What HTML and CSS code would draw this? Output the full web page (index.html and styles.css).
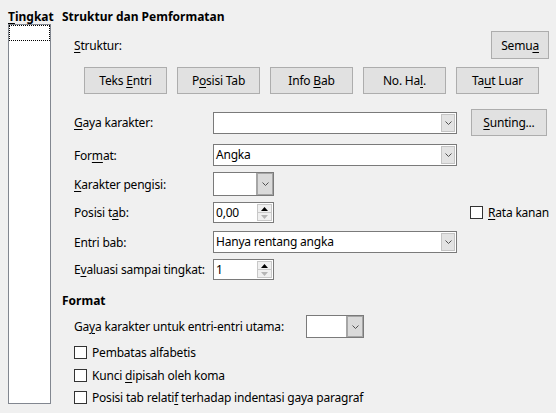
FILE: index.html
```html
<!DOCTYPE html>
<html lang="id">
<head>
<meta charset="utf-8">
<link rel="stylesheet" href="styles.css">
</head>
<body>
<div class="dlg">
  <div class="levels">
    <div class="head"><u>T</u>ingkat</div>
    <div class="listbox"><div class="focus"></div></div>
  </div>
  <div class="main">
    <div class="head">Struktur dan Pemformatan</div>
    <div class="row-struktur">
      <span><u>S</u>truktur:</span>
      <button class="btn semua">Semu<u>a</u></button>
    </div>
    <div class="btnrow">
      <button class="btn">Teks <u>E</u>ntri</button>
      <button class="btn">P<u>o</u>sisi Tab</button>
      <button class="btn">Info <u>B</u>ab</button>
      <button class="btn">No. Ha<u>l</u>.</button>
      <button class="btn">Ta<u>u</u>t Luar</button>
    </div>

    <div class="frow r-gaya">
      <span class="label"><u>G</u>aya karakter:</span>
      <div class="combo"><span class="ctext"></span><span class="drop"><svg width="7" height="4" viewBox="0 0 7 4"><polyline points="0.5,0.5 3.5,3.5 6.5,0.5" fill="none" stroke="#505050" stroke-width="1"/></svg></span></div>
      <button class="btn sunting"><u>S</u>unting...</button>
    </div>

    <div class="frow r-format">
      <span class="label">For<u>m</u>at:</span>
      <div class="combo"><span class="ctext">Angka</span><span class="drop"><svg width="7" height="4" viewBox="0 0 7 4"><polyline points="0.5,0.5 3.5,3.5 6.5,0.5" fill="none" stroke="#505050" stroke-width="1"/></svg></span></div>
    </div>

    <div class="frow r-isi">
      <span class="label"><u>K</u>arakter pengisi:</span>
      <div class="combo small tall"><span class="ctext"></span><span class="drop btnlike"><svg width="7" height="4" viewBox="0 0 7 4"><polyline points="0.5,0.5 3.5,3.5 6.5,0.5" fill="none" stroke="#505050" stroke-width="1"/></svg></span></div>
    </div>

    <div class="frow r-tab">
      <span class="label">Posisi t<u>a</u>b:</span>
      <div class="spin"><span class="ctext">0,00</span><span class="spinbtns"><span class="sb up"><svg width="7" height="4" viewBox="0 0 7 4"><polygon points="0,4 3.5,0 7,4" fill="#000"/></svg></span><span class="sb dn"><svg width="7" height="4" viewBox="0 0 7 4"><polygon points="0,0 3.5,4 7,0" fill="#b5b5b5"/></svg></span></span></div>
      <label class="check rata"><span class="box"></span><span><u>R</u>ata kanan</span></label>
    </div>

    <div class="frow r-bab">
      <span class="label">Entri bab:</span>
      <div class="combo"><span class="ctext">Hanya rentang angka</span><span class="drop"><svg width="7" height="4" viewBox="0 0 7 4"><polyline points="0.5,0.5 3.5,3.5 6.5,0.5" fill="none" stroke="#505050" stroke-width="1"/></svg></span></div>
    </div>

    <div class="frow r-eval">
      <span class="label">E<u>v</u>aluasi sampai tingkat:</span>
      <div class="spin"><span class="ctext">1</span><span class="spinbtns"><span class="sb up"><svg width="7" height="4" viewBox="0 0 7 4"><polygon points="0,4 3.5,0 7,4" fill="#000"/></svg></span><span class="sb dn"><svg width="7" height="4" viewBox="0 0 7 4"><polygon points="0,0 3.5,4 7,0" fill="#b5b5b5"/></svg></span></span></div>
    </div>

    <div class="head h-format">Format</div>

    <div class="frow r-utama">
      <span class="label wide">Ga<u>y</u>a karakter untuk entri-entri utama:</span>
      <div class="combo mini"><span class="ctext"></span><span class="drop btnlike"><svg width="7" height="4" viewBox="0 0 7 4"><polyline points="0.5,0.5 3.5,3.5 6.5,0.5" fill="none" stroke="#505050" stroke-width="1"/></svg></span></div>
    </div>

    <label class="check c1"><span class="box"></span><span>Pembatas alfabetis</span></label>
    <label class="check c2"><span class="box"></span><span>Kunci <u>d</u>ipisah oleh koma</span></label>
    <label class="check c3"><span class="box"></span><span>Posisi tab relati<u>f</u> terhadap indentasi gaya paragraf</span></label>
  </div>
</div>
</body>
</html>
```

FILE: styles.css
```css
html, body {
  margin: 0;
  padding: 0;
}
body {
  background: #f0f0f0;
  font-family: "Noto Sans", "Open Sans", sans-serif;
  font-size: 12px;
  letter-spacing: -0.2px;
  color: #000;
}
u {
  text-decoration-thickness: 1px;
  text-underline-offset: 2px;
}
.dlg {
  display: flex;
  padding: 9px 9px 0 8px;
  height: 413px;
  box-sizing: border-box;
}
.levels {
  width: 43px;
  display: flex;
  flex-direction: column;
}
.head {
  font-weight: bold;
  letter-spacing: 0;
  line-height: 15px;
  height: 15px;
  white-space: nowrap;
}
.listbox {
  height: 380px;
  border: 1px solid #828790;
  background: #fff;
  box-sizing: border-box;
}
.focus {
  height: 16px;
  border: 1px dotted #000;
  box-sizing: border-box;
}
.main {
  margin-left: 11px;
  flex: 1;
  display: flex;
  flex-direction: column;
}
.btn {
  font: inherit;
  letter-spacing: inherit;
  color: #000;
  background: #e1e1e1;
  border: 1px solid #adadad;
  box-sizing: border-box;
  padding: 0;
  margin: 0;
}
.row-struktur {
  margin-top: 7px;
  height: 28px;
  display: flex;
  align-items: center;
  justify-content: space-between;
  padding-left: 12px;
}
.semua {
  width: 58px;
  height: 28px;
}
.btnrow {
  margin-top: 8px;
  display: flex;
  gap: 10px;
  padding-left: 22px;
}
.btnrow .btn {
  width: 83px;
  height: 27px;
}
.frow {
  display: flex;
  align-items: center;
  padding-left: 12px;
}
.label {
  width: 139px;
  flex: none;
  white-space: nowrap;
}
.label.wide {
  width: 232px;
}
.combo, .spin {
  display: flex;
  width: 244px;
  height: 22px;
  border: 1px solid #7a7a7a;
  background: #fff;
  box-sizing: border-box;
  flex: none;
}
.ctext {
  flex: 1;
  padding-left: 2px;
  line-height: 20px;
  white-space: nowrap;
  overflow: hidden;
}
.drop {
  width: 14px;
  margin: 1px;
  background: #e3e3e3;
  border: 1px solid #c4c4c4;
  display: flex;
  align-items: center;
  justify-content: center;
  box-sizing: border-box;
}
.drop.btnlike {
  width: 17px;
  margin: 0;
  background: #dadada;
  border: 2px solid #a6a6a6;
  border-right-width: 1px;
  border-top-width: 1px;
  border-bottom-width: 1px;
}
.combo.small {
  width: 61px;
}
.combo.tall {
  height: 24px;
}
.combo.mini {
  width: 58px;
  height: 23px;
}
.spin {
  width: 61px;
  height: 21px;
}
.spin .ctext {
  line-height: 19px;
}
.spinbtns {
  width: 15px;
  margin: 1px 1px 1px 0;
  display: flex;
  flex-direction: column;
}
.sb {
  flex: 1;
  display: flex;
  align-items: center;
  justify-content: center;
  background: #f0f0f0;
  border: 1px solid #c8c8c8;
}
.sb.dn {
  border-top: none;
}
.r-gaya {
  margin-top: 15px;
  height: 27px;
}
.sunting {
  margin-left: 14px;
  width: 76px;
  height: 27px;
}
.r-format {
  margin-top: 8px;
  height: 22px;
}
.r-isi {
  margin-top: 6px;
  height: 24px;
}
.r-tab {
  margin-top: 6px;
  height: 21px;
}
.r-bab {
  margin-top: 8px;
  height: 22px;
}
.r-eval {
  margin-top: 6px;
  height: 21px;
}
.h-format {
  margin-top: 13px;
}
.r-utama {
  margin-top: 7px;
  height: 23px;
}
.check {
  display: flex;
  align-items: center;
  gap: 5px;
  white-space: nowrap;
  height: 13px;
}
.box {
  width: 13px;
  height: 13px;
  border: 1px solid #333;
  background: #fff;
  box-sizing: border-box;
  flex: none;
}
.rata {
  margin-left: 196px;
}
.c1, .c2, .c3 {
  padding-left: 12px;
}
.c1 {
  margin-top: 8px;
}
.c2 {
  margin-top: 10px;
}
.c3 {
  margin-top: 9px;
}
```
